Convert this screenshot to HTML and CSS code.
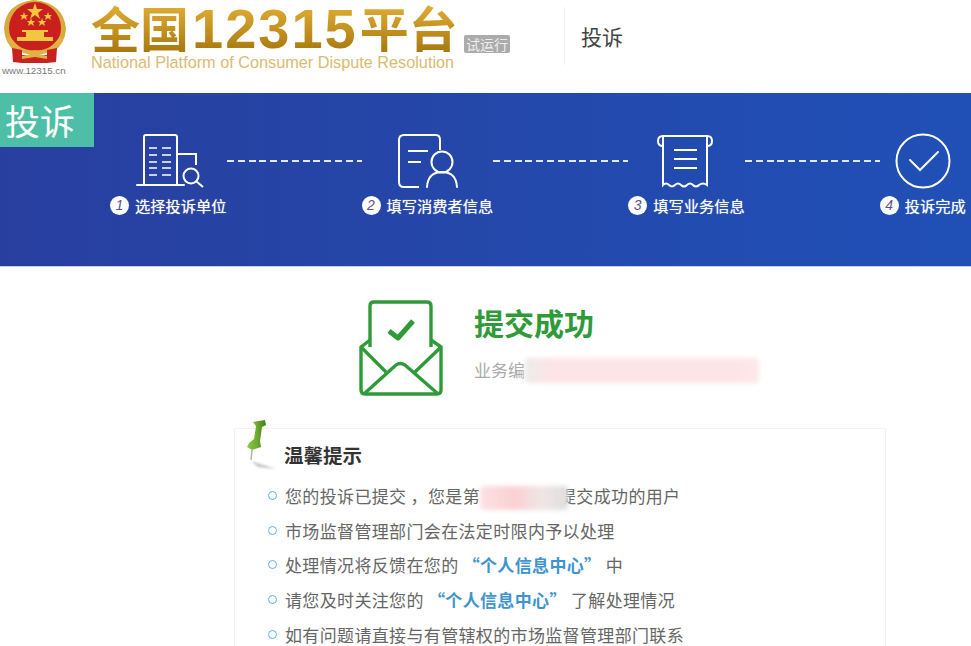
FILE: index.html
```html
<!DOCTYPE html>
<html lang="zh-CN">
<head>
    <meta charset="UTF-8">
    <title>全国12315平台 - 投诉</title>
    <link rel="stylesheet" href="styles.css">
</head>
<body>
    <header class="header">
        <div class="emblem">
            <svg width="65" height="64" viewBox="0 0 65 64">
                <path d="M14 52 Q3 44 2 29 Q3 3 32 0 Q62 3 64 29 Q63 44 51 52Z" fill="#d8a93c"/>
                <circle cx="33" cy="28" r="26" fill="#c9201d"/>
                <g fill="#f3c63f">
                    <polygon points="33,3 35,9 41,9 36,13 38,19 33,15 28,19 30,13 25,9 31,9"/>
                    <polygon points="22,12 23,15 26,15 24,17 25,20 22,18 19,20 20,17 18,15 21,15"/>
                    <polygon points="46,12 47,15 50,15 48,17 49,20 46,18 43,20 44,17 42,15 45,15"/>
                    <polygon points="29,18 30,21 33,21 31,23 32,26 29,24 26,26 27,23 25,21 28,21"/>
                    <polygon points="40,18 41,21 44,21 42,23 43,26 40,24 37,26 38,23 36,21 39,21"/>
                    <rect x="20" y="30" width="26" height="2"/>
                    <rect x="24" y="32" width="18" height="5"/>
                    <rect x="15" y="37" width="36" height="4"/>
                </g>
                <path d="M8 36 Q18 52 33 50 Q48 52 58 36 L61 40 Q50 56 33 54 Q16 56 5 40Z" fill="#e0b244"/>
                <path d="M10 48 L20 50 L20 63 L11 62Z M55 48 L45 50 L45 63 L54 62Z M20 55 H45 V63 H20Z" fill="#c8211e"/>
                <path d="M20 56 L33 53 L45 56 L45 59 L33 57 L20 59Z" fill="#e0b244"/>
            </svg>
            <span class="emblem-url">www.12315.cn</span>
        </div>
        <div class="brand">
            <div class="brand-title">全国<span class="brand-num">12315</span>平台</div>
            <div class="brand-sub">National Platform of Consumer Dispute Resolution</div>
        </div>
        <span class="trial">试运行</span>
        <div class="header-page">投诉</div>
    </header>

    <section class="banner">
        <div class="tab">投诉</div>
        <div class="steps">
            <div class="step step-1">
                <svg class="step-icon" width="70" height="56" viewBox="0 0 70 56" fill="none" stroke="#fff" stroke-width="2">
                    <path d="M8 52V4Q8 2 10 2H39Q41 2 41 4V52"/>
                    <path d="M1 52H48" stroke-linecap="round"/>
                    <path d="M13 15H21M26 15H35M13 22H21M26 22H35M13 29H21M26 29H35M13 35H21M26 35H35M13 42H21M26 42H35" stroke-width="1.6"/>
                    <path d="M41 21H60V32"/>
                    <circle cx="55" cy="43" r="7.5"/>
                    <path d="M60.5 48.5L67 54"/>
                </svg>
                <div class="step-label"><i class="step-no">1</i>选择投诉单位</div>
            </div>
            <div class="dash"></div>
            <div class="step step-2">
                <svg class="step-icon" width="62" height="56" viewBox="0 0 62 56" fill="none" stroke="#fff" stroke-width="2">
                    <path d="M22 54H7Q2 54 2 49V7Q2 2 7 2H39Q43 2 43 7V17"/>
                    <path d="M11 18H31M11 29H24" stroke-width="1.8"/>
                    <circle cx="45" cy="29" r="10.5"/>
                    <path d="M30 54Q31 39 45 39Q59 39 60 54" stroke-linecap="round"/>
                </svg>
                <div class="step-label"><i class="step-no">2</i>填写消费者信息</div>
            </div>
            <div class="dash"></div>
            <div class="step step-3">
                <svg class="step-icon" width="58" height="56" viewBox="0 0 58 56" fill="none" stroke="#fff" stroke-width="2">
                    <path d="M7 3H51Q56 3 56 8Q56 13 51 13M7 3Q2 3 2 8Q2 13 7 13"/>
                    <path d="M7 3V52Q10 49 13 52Q16 55 19 52Q22 49 25 52Q28 55 31 52Q34 49 37 52Q40 55 43 52Q47 49 51 52V3"/>
                    <path d="M18 17H41M18 26H41M18 35H41"/>
                </svg>
                <div class="step-label"><i class="step-no">3</i>填写业务信息</div>
            </div>
            <div class="dash"></div>
            <div class="step step-4">
                <svg class="step-icon" width="56" height="56" viewBox="0 0 56 56" fill="none" stroke="#fff" stroke-width="2">
                    <circle cx="28" cy="28" r="26.5"/>
                    <path d="M15 27L25 37L43 19" stroke-linecap="round"/>
                </svg>
                <div class="step-label"><i class="step-no">4</i>投诉完成</div>
            </div>
        </div>
    </section>

    <main class="content">
        <div class="result">
            <svg class="result-icon" width="84" height="96" viewBox="0 0 84 96" fill="none" stroke="#2f9a38" stroke-width="3.4" stroke-linejoin="round">
                <path d="M11 47V6Q11 2 15 2H68Q72 2 72 6V47"/>
                <path d="M11 40L2 47V90Q2 94 6 94H78Q82 94 82 90V47L72 40"/>
                <path d="M2 47L27 72M82 47L56 72"/>
                <path d="M6 93L37 65Q41 62 46 65L78 93"/>
                <path d="M30 31L39 38L54 21" stroke-width="5"/>
            </svg>
            <div class="result-text">
                <h1 class="result-title">提交成功</h1>
                <div class="result-code">业务编<span class="smudge smudge-long"></span></div>
            </div>
        </div>

        <div class="tips">
            <svg class="pin" width="36" height="54" viewBox="0 0 36 54">
                <defs>
                    <linearGradient id="pinGreen" x1="0" y1="0" x2="1" y2="0">
                        <stop offset="0" stop-color="#8fc94a"/>
                        <stop offset=".5" stop-color="#6fae2e"/>
                        <stop offset="1" stop-color="#3f7d1c"/>
                    </linearGradient>
                    <filter id="pinBlur"><feGaussianBlur stdDeviation="1"/></filter>
                </defs>
                <path d="M7 42L32 50L14 48Z" fill="#c4c4c4" filter="url(#pinBlur)"/>
                <path d="M8 31L7 41" stroke="#b5b5a5" stroke-width="1.5"/>
                <path d="M9 3L21 1L22 6L18 8L16 22L17 28L8 31L3 28L5 24L10 20L12 7Z" fill="url(#pinGreen)"/>
            </svg>
            <h2 class="tips-title">温馨提示</h2>
            <ul class="tips-list">
                <li>您的投诉已提交 ，您是第<span class="smudge smudge-short"></span>提交成功的用户</li>
                <li>市场监督管理部门会在法定时限内予以处理</li>
                <li>处理情况将反馈在您的 <b>“个人信息中心”</b> 中</li>
                <li>请您及时关注您的 <b>“个人信息中心”</b> 了解处理情况</li>
                <li>如有问题请直接与有管辖权的市场监督管理部门联系</li>
            </ul>
        </div>
    </main>
</body>
</html>
```

FILE: styles.css
```css
html, body {
    height: 646px;
    overflow: hidden;
}
body {
    margin: 0;
    background-color: #fff;
    font-family: "Noto Sans CJK SC", "Liberation Sans", sans-serif;
}

/* header */
.header {
    display: flex;
    height: 93px;
    padding-left: 2px;
}
.emblem {
    display: flex;
    flex-direction: column;
    width: 65px;
}
.emblem-url {
    font-family: "Liberation Sans", sans-serif;
    font-size: 9.8px;
    line-height: 14px;
    color: #777;
    white-space: nowrap;
}
.brand {
    margin-left: 24px;
    width: 373px;
}
.brand-title {
    height: 50px;
    margin-top: 2px;
    font-size: 49px;
    line-height: 50px;
    font-weight: 700;
    white-space: nowrap;
    color: transparent;
    background: linear-gradient(#e3b135, #a9780f);
    background-clip: text;
    -webkit-background-clip: text;
}
.brand-num {
    margin: 0 2px 0 3px;
    font-family: "Liberation Sans", sans-serif;
    font-size: 56px;
    letter-spacing: 2px;
}
.brand-sub {
    margin-top: 3px;
    font-family: "Liberation Sans", sans-serif;
    font-size: 16.25px;
    line-height: 15px;
    color: #d9bb72;
    white-space: nowrap;
}
.trial {
    align-self: flex-start;
    margin: 35px 0 0;
    width: 46px;
    height: 18px;
    background-color: #ababab;
    border-radius: 2px;
    color: #eee;
    font-size: 14px;
    line-height: 18px;
    text-align: center;
    white-space: nowrap;
}
.header-page {
    align-self: flex-start;
    margin: 7px 0 0 54px;
    height: 58px;
    padding-left: 16px;
    border-left: 1px solid #f1f1f1;
    font-size: 21px;
    line-height: 58px;
    color: #444;
}

/* blue band with the steps */
.banner {
    position: relative;
    height: 174px;
    background: linear-gradient(90deg, #283f9f, #2050b6);
    border-bottom: 1px solid #c5cfe8;
    box-sizing: border-box;
}
.tab {
    position: absolute;
    left: 0;
    top: 0;
    width: 94px;
    height: 54px;
    background-color: #4dbfa6;
    color: #fff;
    font-size: 35px;
    line-height: 54px;
    padding-left: 5px;
    box-sizing: border-box;
}
.steps {
    display: flex;
    padding: 40px 0 0 110px;
    white-space: nowrap;
}
.step {
    display: flex;
    flex-direction: column;
    flex: none;
}
.step-icon {
    display: block;
    height: 56px;
    flex: none;
}
.step-1 .step-icon { margin-left: 26px; }
.step-2 .step-icon { margin-left: 35px; }
.step-3 .step-icon { margin-left: 28px; }
.step-4 .step-icon { margin-left: 15px; }
.step-label {
    display: flex;
    align-items: center;
    height: 20px;
    margin-top: 6px;
    color: #fff;
    font-size: 15.25px;
    line-height: 20px;
    text-shadow: 0 0 1px rgba(255, 255, 255, .7);
}
.step-no {
    width: 19px;
    height: 19px;
    margin-right: 6px;
    border-radius: 50%;
    background-color: #fff;
    color: #55558a;
    font-family: "Liberation Sans", sans-serif;
    font-size: 14px;
    line-height: 19px;
    text-align: center;
    text-shadow: none;
}
.dash {
    flex: none;
    width: 135px;
    height: 2px;
    margin-top: 27px;
    background: repeating-linear-gradient(90deg, #e4e9f6 0, #e4e9f6 7px, transparent 7px, transparent 10.8px);
}

/* result */
.content {
    width: 652px;
    margin-left: 234px;
}
.result {
    display: flex;
    padding: 33px 0 0 125px;
    height: 161px;
    box-sizing: border-box;
}
.result-icon {
    flex: none;
}
.result-text {
    margin-left: 31px;
}
.result-title {
    margin: 0;
    font-size: 30px;
    line-height: 44px;
    font-weight: 700;
    color: #2f9a38;
}
.result-code {
    display: flex;
    align-items: center;
    margin-top: 12px;
    font-size: 17px;
    line-height: 28px;
    color: #aaa;
}
.smudge {
    display: inline-block;
    border-radius: 4px;
    background: linear-gradient(90deg, #ececec, #fde4e5 12%, #fde4e5 85%, #fde8e8);
    filter: blur(2px);
}
.smudge-long {
    width: 234px;
    height: 25px;
}
.smudge-short {
    position: relative;
    width: 88px;
    height: 24px;
    margin-right: -9px;
    vertical-align: middle;
    background: linear-gradient(90deg, #fde1e3, #fbd0d3 40%, #f0e6e6 70%, #dedede);
}

/* tips */
.tips {
    position: relative;
    height: 218px;
    border: 1px solid #f2f2f2;
    border-bottom: none;
    box-sizing: border-box;
}
.pin {
    position: absolute;
    left: 9px;
    top: -10px;
}
.tips-title {
    margin: 12px 0 0 49px;
    font-size: 19.5px;
    line-height: 28px;
    font-weight: 700;
    color: #333;
}
.tips-list {
    margin: 16px 0 0;
    padding: 0 0 0 50px;
    list-style: none;
}
.tips-list li {
    position: relative;
    height: 22px;
    margin-bottom: 12.7px;
    font-size: 17px;
    line-height: 22px;
    letter-spacing: .35px;
    color: #666;
    white-space: nowrap;
}
.tips-list li:last-child {
    margin-bottom: 0;
}
.tips-list li::before {
    content: "";
    position: absolute;
    left: -17px;
    top: 6px;
    width: 7px;
    height: 7px;
    border: 1.5px solid #5bb5dc;
    border-radius: 50%;
}
.tips-list b {
    color: #3f94d0;
    font-weight: 700;
}
```
